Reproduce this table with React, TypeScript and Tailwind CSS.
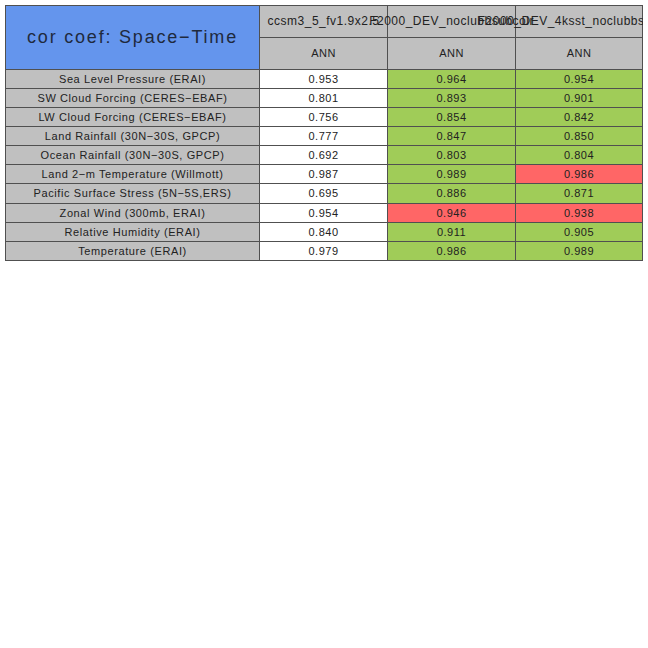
import React from "react";

const rows: { label: string; v: [string, string, string]; c: [string, string] }[] = [
  { label: "Sea Level Pressure (ERAI)", v: ["0.953", "0.964", "0.954"], c: ["g", "g"] },
  { label: "SW Cloud Forcing (CERES\u2212EBAF)", v: ["0.801", "0.893", "0.901"], c: ["g", "g"] },
  { label: "LW Cloud Forcing (CERES\u2212EBAF)", v: ["0.756", "0.854", "0.842"], c: ["g", "g"] },
  { label: "Land Rainfall (30N\u221230S, GPCP)", v: ["0.777", "0.847", "0.850"], c: ["g", "g"] },
  { label: "Ocean Rainfall (30N\u221230S, GPCP)", v: ["0.692", "0.803", "0.804"], c: ["g", "g"] },
  { label: "Land 2\u2212m Temperature (Willmott)", v: ["0.987", "0.989", "0.986"], c: ["g", "r"] },
  { label: "Pacific Surface Stress (5N\u22125S,ERS)", v: ["0.695", "0.886", "0.871"], c: ["g", "g"] },
  { label: "Zonal Wind (300mb, ERAI)", v: ["0.954", "0.946", "0.938"], c: ["r", "r"] },
  { label: "Relative Humidity (ERAI)", v: ["0.840", "0.911", "0.905"], c: ["g", "g"] },
  { label: "Temperature (ERAI)", v: ["0.979", "0.986", "0.989"], c: ["g", "g"] },
];

const font = { fontFamily: '"Liberation Sans", Arial, sans-serif' };

export default function App() {
  return (
    <div className="w-[648px] h-[648px] bg-white pt-[5px] pl-[5px]" style={font}>
      <div className="w-[638px] overflow-hidden grid grid-cols-[253px_127px_127px_126px] grid-rows-[31px_31px_18px_18px_18px_18px_18px_18px_19px_18px_18px_18px] gap-px p-px bg-[#505050] text-[#222222]">
        <div className="row-span-2 bg-[#6495ed] flex items-center justify-center text-[18px] tracking-[1.8px] text-[#1f2a3d]">
          cor coef: Space&minus;Time
        </div>
        {["ccsm3_5_fv1.9x2.5", "F2000_DEV_noclubbsubcolr", "F2000_DEV_4ksst_noclubbsubcolr"].map((h) => (
          <div key={h} className="bg-[#c0c0c0] flex items-center justify-center text-[12px] tracking-[0.5px] whitespace-nowrap pb-[2px]">
            <span className="relative shrink-0">{h}</span>
          </div>
        ))}
        {[0, 1, 2].map((i) => (
          <div key={i} className="bg-[#c0c0c0] flex items-center justify-center text-[11px] tracking-[0.5px]">
            ANN
          </div>
        ))}
        {rows.map((r) => (
          <React.Fragment key={r.label}>
            <div className="bg-[#c0c0c0] flex items-center justify-center text-[11px] tracking-[0.6px] whitespace-nowrap">
              {r.label}
            </div>
            <div className="bg-white flex items-center justify-center text-[11px] tracking-[0.5px]">{r.v[0]}</div>
            {[1, 2].map((k) => (
              <div
                key={k}
                className={
                  (r.c[k - 1] === "g" ? "bg-[#a0cc58]" : "bg-[#ff6666]") +
                  " flex items-center justify-center text-[11px] tracking-[0.5px]"
                }
              >
                {r.v[k]}
              </div>
            ))}
          </React.Fragment>
        ))}
      </div>
    </div>
  );
}
